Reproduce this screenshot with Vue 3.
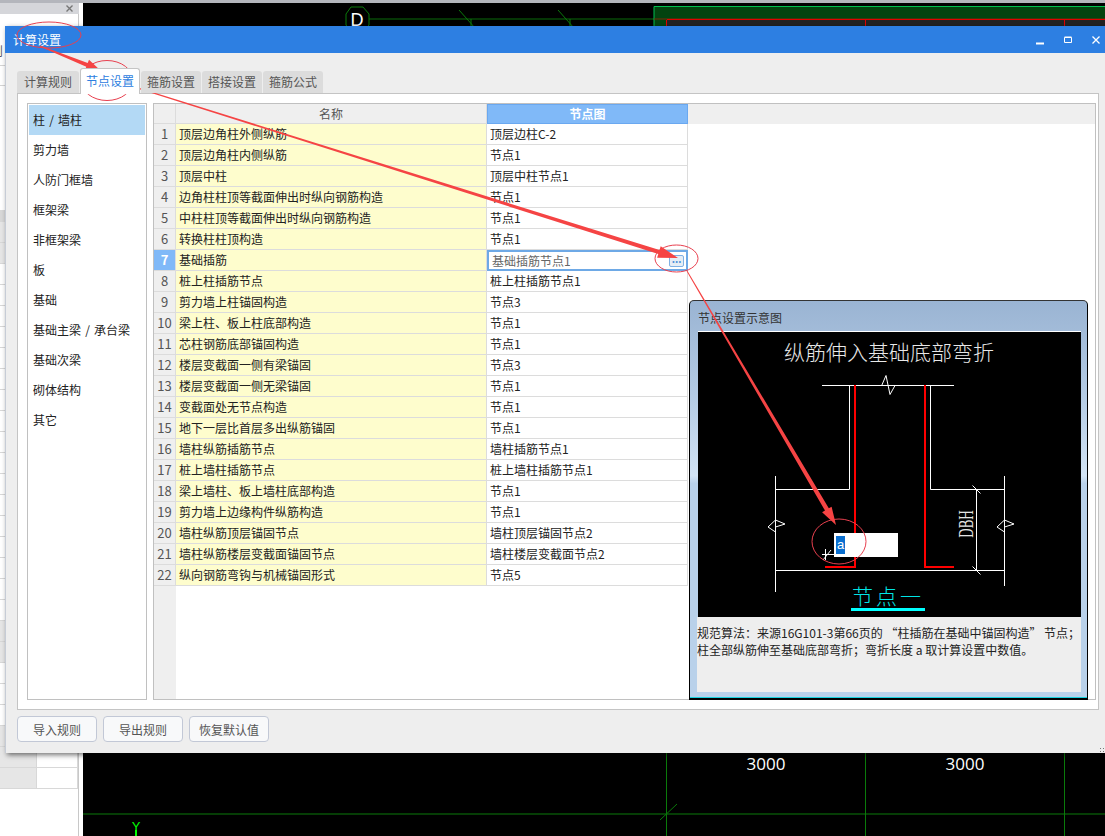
<template>
  <div class="screen">
    <!-- app behind the dialog -->
    <div class="side">
      <div class="side-head">
        <svg width="7" height="7" viewBox="0 0 7 7"><path d="M0.5 0.5L6.5 6.5M6.5 0.5L0.5 6.5" stroke="#777" stroke-width="1.4" /></svg>
      </div>
      <div class="side-top">
        <div class="side-label">则</div>
        <div class="side-line"></div>
      </div>
      <div class="side-band"></div>
      <div class="side-rows">
        <div v-for="(g, i) in sideRows" :key="i" class="side-row" :class="{ grey: g }">
          <div class="side-cell"></div>
          <div class="side-cell right"></div>
        </div>
      </div>
    </div>

    <svg class="canvas" width="1022" height="833" viewBox="83 3 1022 833">
      <rect x="83" y="3" width="1022" height="833" fill="#000" />
      <path d="M369 19H654" stroke="#0a6a0a" stroke-width="1" />
      <path d="M346 14l5-7h12l6 7v11l-6 7h-12l-5-7z" fill="none" stroke="#0a7a0a" />
      <text x="357" y="26" class="cad-d">D</text>
      <path d="M459 10l16 18M558 10l16 18M471 19v10M570 19v10" stroke="#0a7a0a" fill="none" />
      <rect x="654" y="6" width="451" height="30" fill="#03430f" />
      <path d="M654 36V6.5H1105" fill="none" stroke="#00c050" />
      <path d="M654 19H1105" stroke="#7a2a08" />
      <rect x="667" y="19.5" width="438" height="20" fill="#222" />
      <path d="M666.5 20V40M865.5 20V40M1064.5 20V40M667 19.5H1105" stroke="#e00000" fill="none" />
      <path d="M666.5 753V836M865.5 753V836M1064.5 753V836M83 814H1105M660 820l17-16" stroke="#0a7a0a" fill="none" />
      <text x="766" y="770" class="cad-num">3000</text>
      <text x="965" y="770" class="cad-num">3000</text>
      <text x="136" y="831" class="cad-y">Y</text>
      <path d="M136 830V836" stroke="#00ff00" stroke-width="2" />
    </svg>

    <!-- settings dialog -->
    <div class="dialog">
      <div class="titlebar">
        <span>计算设置</span>
        <div class="win-btns">
          <svg width="10" height="10" viewBox="0 0 10 10"><path d="M1 8.5H9" stroke="#fff" stroke-width="2" /></svg>
          <svg width="10" height="10" viewBox="0 0 10 10"><path d="M1.5 2.5H8.5V7.5H1.5Z M1.5 2H8.5" fill="none" stroke="#fff" /></svg>
          <svg width="10" height="10" viewBox="0 0 10 10"><path d="M1.5 1.5L8.5 8.5M8.5 1.5L1.5 8.5" stroke="#fff" stroke-width="1.3" /></svg>
        </div>
      </div>

      <div class="body">
        <div class="tabs">
          <div v-for="t in tabs" :key="t" class="tab" :class="{ active: t === '节点设置' }">{{ t }}</div>
        </div>

        <div class="panel">
          <ul class="cats">
            <li v-for="c in categories" :key="c" :class="{ sel: c === '柱 / 墙柱' }">{{ c }}</li>
          </ul>

          <div class="grid">
            <div class="grid-head">
              <div class="c-num"></div>
              <div class="c-name">名称</div>
              <div class="c-val">节点图</div>
            </div>
            <div class="grid-body">
              <div v-for="(r, i) in rows" :key="i" class="grid-row" :class="{ current: i === 6 }">
                <div class="c-num">{{ i + 1 }}</div>
                <div class="c-name">{{ r[0] }}</div>
                <div class="c-val">
                  <span>{{ r[1] }}</span>
                  <span v-if="i === 6" class="dots">...</span>
                </div>
              </div>
            </div>
          </div>
        </div>

        <div class="actions">
          <button>导入规则</button>
          <button>导出规则</button>
          <button>恢复默认值</button>
        </div>
      </div>

      <div class="grip"></div>

      <!-- node preview popup -->
      <div class="preview">
        <div class="preview-title">节点设置示意图</div>
        <div class="picture">
          <svg width="383" height="285" viewBox="0 0 383 285">
            <text x="191" y="28" class="pic-title">纵筋伸入基础底部弯折</text>
            <g fill="none" stroke="#fff">
              <path d="M124 53.5H256" />
              <path d="M183.7 53.5L188 43.5L192 62.5L197 53.5" />
              <path d="M151.5 53.5V157.5H77.5" />
              <path d="M232.5 53.5V157.5H306.5" />
              <path d="M77.5 144V260M306.5 144V254M77.5 238.5H306.5" />
              <path d="M77.5 188L70 195L77.5 200M77.5 188L87 192L77.5 195" />
              <path d="M306.5 188L299 195L306.5 200M306.5 188L316 192L306.5 195" />
              <path d="M278.5 157.5V238.5M274.5 153.5L282.5 161.5M274.5 234.5L282.5 242.5" />
              <path d="M124 222.5H136M125 228L133 218M127.5 217V228" />
            </g>
            <g fill="none" stroke="#f00" stroke-width="2">
              <path d="M157 53V235H127" />
              <path d="M227 53V235H256" />
            </g>
            <text transform="translate(275 192) rotate(-90) scale(0.65 1)" class="pic-dbh">DBH</text>
            <text x="190" y="272" class="pic-node">节点一</text>
            <rect x="153" y="276" width="74" height="3" fill="#0ff" />
          </svg>
          <div class="edit-box"><span>a</span></div>
        </div>
        <div class="preview-text">规范算法：来源16G101-3第66页的 “柱插筋在基础中锚固构造” 节点；<br />柱全部纵筋伸至基础底部弯折；弯折长度 a 取计算设置中数值。</div>
      </div>
    </div>

    <!-- red markup on top of the screenshot -->
    <svg class="markup" width="1105" height="836" viewBox="0 0 1105 836">
      <g fill="none" stroke="#e8404f">
        <ellipse cx="49" cy="35" rx="32" ry="13" />
        <ellipse cx="107" cy="80.5" rx="26" ry="20" />
        <ellipse cx="676.5" cy="258.5" rx="21.5" ry="13.5" />
        <ellipse cx="839" cy="541.5" rx="27" ry="22.5" />
      </g>
      <g fill="#f54444">
        <polygon v-for="(a, i) in arrows" :key="i" :points="arrowPoints(a)" />
      </g>
    </svg>
  </div>
</template>

<script setup>
const tabs = ["计算规则", "节点设置", "箍筋设置", "搭接设置", "箍筋公式"];

const categories = [
  "柱 / 墙柱",
  "剪力墙",
  "人防门框墙",
  "框架梁",
  "非框架梁",
  "板",
  "基础",
  "基础主梁 / 承台梁",
  "基础次梁",
  "砌体结构",
  "其它"
];

const rows = [
  ["顶层边角柱外侧纵筋", "顶层边柱C-2"],
  ["顶层边角柱内侧纵筋", "节点1"],
  ["顶层中柱", "顶层中柱节点1"],
  ["边角柱柱顶等截面伸出时纵向钢筋构造", "节点1"],
  ["中柱柱顶等截面伸出时纵向钢筋构造", "节点1"],
  ["转换柱柱顶构造", "节点1"],
  ["基础插筋", "基础插筋节点1"],
  ["桩上柱插筋节点", "桩上柱插筋节点1"],
  ["剪力墙上柱锚固构造", "节点3"],
  ["梁上柱、板上柱底部构造", "节点1"],
  ["芯柱钢筋底部锚固构造", "节点1"],
  ["楼层变截面一侧有梁锚固", "节点3"],
  ["楼层变截面一侧无梁锚固", "节点1"],
  ["变截面处无节点构造", "节点1"],
  ["地下一层比首层多出纵筋锚固", "节点1"],
  ["墙柱纵筋插筋节点", "墙柱插筋节点1"],
  ["桩上墙柱插筋节点", "桩上墙柱插筋节点1"],
  ["梁上墙柱、板上墙柱底部构造", "节点1"],
  ["剪力墙上边缘构件纵筋构造", "节点1"],
  ["墙柱纵筋顶层锚固节点", "墙柱顶层锚固节点2"],
  ["墙柱纵筋楼层变截面锚固节点", "墙柱楼层变截面节点2"],
  ["纵向钢筋弯钩与机械锚固形式", "节点5"]
];

const greyRows = [0, 1, 19, 20, 24, 25, 26];
const sideRows = Array.from({ length: 27 }, (_, i) => greyRows.includes(i));

// x1,y1 -> x2,y2, width at tail, width at head base, head length, head width
const arrows = [
  [40, 46, 100, 70, 1, 4, 14, 11],
  [128, 85, 678, 258, 1, 4, 20, 12],
  [687, 271, 836, 525, 1, 4.5, 18, 11]
];

const arrowPoints = ([x1, y1, x2, y2, w1, w2, len, head]) => {
  const d = Math.hypot(x2 - x1, y2 - y1);
  const ux = (x2 - x1) / d;
  const uy = (y2 - y1) / d;
  const nx = -uy;
  const ny = ux;
  const bx = x2 - ux * len;
  const by = y2 - uy * len;
  const pts = [
    [x1 + nx * w1 / 2, y1 + ny * w1 / 2],
    [bx + nx * w2 / 2, by + ny * w2 / 2],
    [bx + nx * head / 2, by + ny * head / 2],
    [x2, y2],
    [bx - nx * head / 2, by - ny * head / 2],
    [bx - nx * w2 / 2, by - ny * w2 / 2],
    [x1 - nx * w1 / 2, y1 - ny * w1 / 2]
  ];
  return pts.map(p => p[0].toFixed(1) + "," + p[1].toFixed(1)).join(" ");
};
</script>

<style scoped>
.screen {
  position: relative;
  display: flex;
  width: 1105px;
  height: 836px;
  padding-top: 3px;
  box-sizing: border-box;
  overflow: hidden;
  background: #b4b6bc;
  font-family: "Noto Sans CJK SC", "Liberation Sans", sans-serif;
  font-size: 12px;
  color: #222;
}

/* background app */
.side {
  width: 83px;
  height: 833px;
  flex: none;
  background: #fff;
  overflow: hidden;
}

.side-head {
  display: flex;
  justify-content: flex-end;
  align-items: center;
  width: 79px;
  height: 11px;
  box-sizing: border-box;
  padding-right: 6px;
  background: #d5d6da;
}

.side-top {
  height: 196px;
  width: 79px;
  box-sizing: border-box;
  border-right: 1px solid #c8c8c8;
  padding-top: 28px;
}

.side-label {
  height: 24px;
  box-sizing: border-box;
  line-height: 18px;
  text-indent: -9px;
  color: #555;
  border-bottom: 1px solid #d4d4d4;
}

.side-line {
  height: 20px;
  box-sizing: border-box;
  border-bottom: 1px solid #d4d4d4;
}

.side-band {
  width: 79px;
  height: 12px;
  background: #d8d8d8;
}

.side-rows {
  width: 79px;
  height: 614px;
  box-sizing: border-box;
  border-right: 1px solid #c8c8c8;
}

.side-row {
  display: flex;
  height: 21px;
  box-sizing: border-box;
  border-bottom: 1px solid #d8d8d8;
}

.side-cell {
  width: 36px;
  height: 20px;
}

.side-cell.right {
  width: 40px;
  border-left: 1px solid #d8d8d8;
  border-right: 1px solid #d8d8d8;
}

.side-row.grey .side-cell:first-child {
  background: #e6e6e6;
}

.canvas {
  flex: none;
  display: block;
}

.cad-d {
  fill: #fff;
  font-family: "Liberation Sans", sans-serif;
  font-size: 18px;
  text-anchor: middle;
}

.cad-num {
  fill: #fff;
  font-family: "Open Sans", sans-serif;
  font-size: 17px;
  text-anchor: middle;
}

.cad-y {
  fill: #00ff00;
  font-family: "Liberation Sans", sans-serif;
  font-size: 13px;
  text-anchor: middle;
}

/* dialog */
.dialog {
  position: absolute;
  left: 5px;
  top: 26px;
  width: 1100px;
  height: 727px;
  display: flex;
  flex-direction: column;
  background: #eeeeee;
  box-shadow: 2px 2px 5px rgba(0, 0, 0, 0.55);
}

.titlebar {
  flex: none;
  height: 27px;
  display: flex;
  align-items: center;
  justify-content: space-between;
  padding: 0 4px 0 8px;
  background: #2d7fe2;
  color: #fff;
}

.win-btns {
  display: flex;
  gap: 18px;
}

.win-btns svg {
  display: block;
}

.body {
  flex: 1;
  min-height: 0;
  display: flex;
  flex-direction: column;
  padding: 15px 6px 0 12px;
  border-left: 1px solid #c6ccd6;
}

.tabs {
  flex: none;
  height: 25px;
  display: flex;
  align-items: flex-end;
  gap: 1px;
  position: relative;
  z-index: 1;
  margin-left: -1px;
}

.tab {
  width: 60px;
  height: 22px;
  line-height: 22px;
  text-align: center;
  background: #dcdcdc;
  color: #555;
  border-radius: 3px 3px 0 0;
}

.tab:first-child {
  width: 62px;
}

.tab.active {
  height: 26px;
  line-height: 24px;
  margin-bottom: -1px;
  background: #fff;
  color: #2d80e0;
  border: 1px solid #c4c4c4;
  border-bottom: none;
  box-sizing: border-box;
}

.panel {
  flex: none;
  height: 617px;
  width: 1082px;
  margin-left: -1px;
  box-sizing: border-box;
  display: flex;
  gap: 6px;
  padding: 9px 2px 9px 9px;
  background: #fff;
  border: 1px solid #c4c4c4;
}

.cats {
  flex: none;
  width: 120px;
  margin: 0;
  padding: 1px;
  box-sizing: border-box;
  list-style: none;
  border: 1px solid #c0c0c0;
  word-spacing: 1.5px;
}

.cats li {
  height: 30px;
  line-height: 30px;
  padding-left: 4px;
}

.cats li.sel {
  background: #b3d9f5;
}

.grid {
  flex: 1;
  display: flex;
  flex-direction: column;
  border: 1px solid #c0c0c0;
}

.grid-head {
  flex: none;
  display: flex;
  height: 20px;
  line-height: 20px;
  background: #efefef;
  color: #555;
  text-align: center;
}

.grid-head .c-num,
.grid-head .c-name {
  border-right: 1px solid #dcdcdc;
}

.grid-head .c-name {
  padding: 0;
  background: #efefef;
}

.grid-head .c-val {
  padding: 0;
  height: 20px;
  background: #80b9f8;
  border: 1px solid #6aa8f0;
  color: #fff;
  font-weight: bold;
  line-height: 18px;
}

.grid-body {
  flex: 1;
  background: linear-gradient(to right, #efefef 22px, #fff 22px);
}

.grid-row {
  display: flex;
  height: 21px;
  line-height: 20px;
}

.c-num,
.c-name,
.c-val {
  box-sizing: border-box;
  border-bottom: 1px solid #dcdcdc;
  border-right: 1px solid #dcdcdc;
}

.c-num {
  flex: none;
  width: 22px;
  text-align: center;
  background: #efefef;
  color: #555;
  font-size: 13px;
}

.c-name {
  flex: none;
  width: 311px;
  padding-left: 3px;
  background: #fefdcd;
}

.c-val {
  flex: none;
  width: 201px;
  padding-left: 3px;
}

.current .c-num {
  background: #80b9f8;
  color: #fff;
  font-weight: bold;
}

.current .c-val {
  display: flex;
  align-items: center;
  justify-content: space-between;
  padding: 0 2px 0 3px;
  border: 2px solid #6ea9e6;
  color: #666;
  line-height: 16px;
}

.dots {
  width: 15px;
  height: 12px;
  line-height: 6px;
  text-align: center;
  font-weight: bold;
  color: #4b8fd8;
  background: #e6edf5;
  border: 1px solid #7fb0e4;
  border-radius: 2px;
  font-size: 10px;
  box-sizing: border-box;
}

.actions {
  flex: none;
  display: flex;
  gap: 6px;
  margin-top: 6px;
  margin-left: -1px;
}

.actions button {
  width: 80px;
  height: 26px;
  padding: 0;
  font: inherit;
  color: #555;
  background: #f8f9fa;
  border: 1px solid #c2c8d6;
  border-radius: 4px;
}

.grip {
  position: absolute;
  right: 1px;
  bottom: 1px;
  width: 5px;
  height: 5px;
  background: radial-gradient(circle, #777 0.8px, transparent 1px) 0 0 / 3px 3px;
}

/* preview popup */
.preview {
  position: absolute;
  left: 684px;
  top: 274px;
  width: 399px;
  height: 400px;
  box-sizing: border-box;
  border: 1px solid #000;
  border-top-color: #333;
  border-bottom: 2px solid #000;
  box-shadow: inset 0 -1px 0 #19d3e0;
  border-radius: 5px 5px 0 0;
  padding: 0 6px 6px 8px;
  display: flex;
  flex-direction: column;
  background: linear-gradient(to bottom, #9ab4d3 0, #b4cbe4 24%, #d2e3f4 44%, #b9d1ea 46%, #b9d1ea 100%);
}

.preview-title {
  flex: none;
  height: 30px;
  line-height: 34px;
  color: #333;
}

.picture {
  flex: none;
  position: relative;
  height: 286px;
  background: #000;
  border-top: 1px solid #fff;
  box-sizing: border-box;
}

.picture svg {
  display: block;
}

.pic-title {
  fill: #e8e8e8;
  font-size: 21px;
  font-weight: 300;
  text-anchor: middle;
}

.pic-dbh {
  fill: #e4e4e4;
  font-family: "Liberation Serif", serif;
  font-size: 20px;
  text-anchor: middle;
}

.pic-node {
  fill: #00e5e5;
  font-size: 21px;
  font-weight: 300;
  letter-spacing: 3px;
  text-anchor: middle;
}

.edit-box {
  position: absolute;
  left: 136px;
  top: 201px;
  width: 64px;
  height: 24px;
  padding: 3px 2px;
  box-sizing: border-box;
  background: #fff;
}

.edit-box span {
  display: block;
  width: 9px;
  height: 18px;
  line-height: 18px;
  background: #0a6fd0;
  color: #fff;
  text-align: center;
  font-family: "Liberation Sans", sans-serif;
  font-size: 13px;
}

.preview-text {
  flex: 1;
  margin-left: -1px;
  padding-top: 7px;
  background: #eeeeee;
  line-height: 17px;
  color: #222;
  white-space: nowrap;
}

.markup {
  position: absolute;
  left: 0;
  top: 0;
  pointer-events: none;
}
</style>

<style>
html,
body {
  margin: 0;
  overflow: hidden;
}
</style>
